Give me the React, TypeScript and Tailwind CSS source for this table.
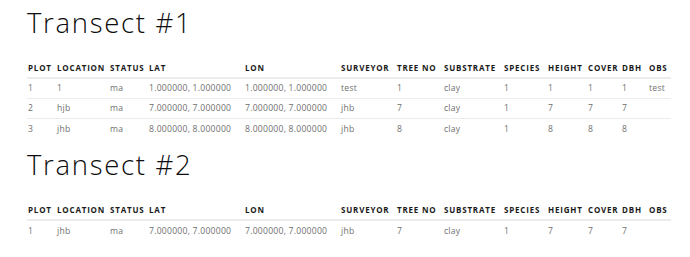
import React from "react";

const cols = "grid-cols-[29px_53px_39px_96px_96px_56px_47px_60px_44px_40px_34px_27px_23px]";
const headers = ["PLOT","LOCATION","STATUS","LAT","LON","SURVEYOR","TREE NO","SUBSTRATE","SPECIES","HEIGHT","COVER","DBH","OBS"];

type Row = string[];

const t1: Row[] = [
  ["1","1","ma","1.000000, 1.000000","1.000000, 1.000000","test","1","clay","1","1","1","1","test"],
  ["2","hjb","ma","7.000000, 7.000000","7.000000, 7.000000","jhb","7","clay","1","7","7","7",""],
  ["3","jhb","ma","8.000000, 8.000000","8.000000, 8.000000","jhb","8","clay","1","8","8","8",""],
];
const t2: Row[] = [
  ["1","jhb","ma","7.000000, 7.000000","7.000000, 7.000000","jhb","7","clay","1","7","7","7",""],
];

function Section({ title, rows, className = "" }: { title: string; rows: Row[]; className?: string }) {
  return (
    <div className={className}>
      <div className="h-[59px] pt-[3px]">
        <h2 className="text-[27.5px] leading-[40px] font-light text-[#0d0d0d] tracking-[1.7px]">{title}</h2>
      </div>
      <div className="w-[644px]">
        <div className={`grid ${cols} h-[20px] items-center border-b-2 border-[#ececec]`}>
          {headers.map((h) => (
            <div key={h} className="pl-[1px] text-[8px] font-bold text-[#1a1a1a] tracking-[0.8px] whitespace-nowrap">{h}</div>
          ))}
        </div>
        {rows.map((r, i) => (
          <div key={i} className={`grid ${cols} h-[20px] items-center ${i < rows.length - 1 ? "border-b border-[#ececec]" : ""}`}>
            {r.map((c, j) => (
              <div key={j} className="pl-[1px] text-[8.6px] font-normal text-[#6f6f6f] tracking-[0.25px] whitespace-nowrap">{c}</div>
            ))}
          </div>
        ))}
      </div>
    </div>
  );
}

export default function App() {
  return (
    <div className="w-[690px] h-[257px] bg-white px-[27px]" style={{ fontFamily: '"Open Sans", sans-serif' }}>
      <Section title="Transect #1" rows={t1} />
      <Section title="Transect #2" rows={t2} className="mt-[3px]" />
    </div>
  );
}
